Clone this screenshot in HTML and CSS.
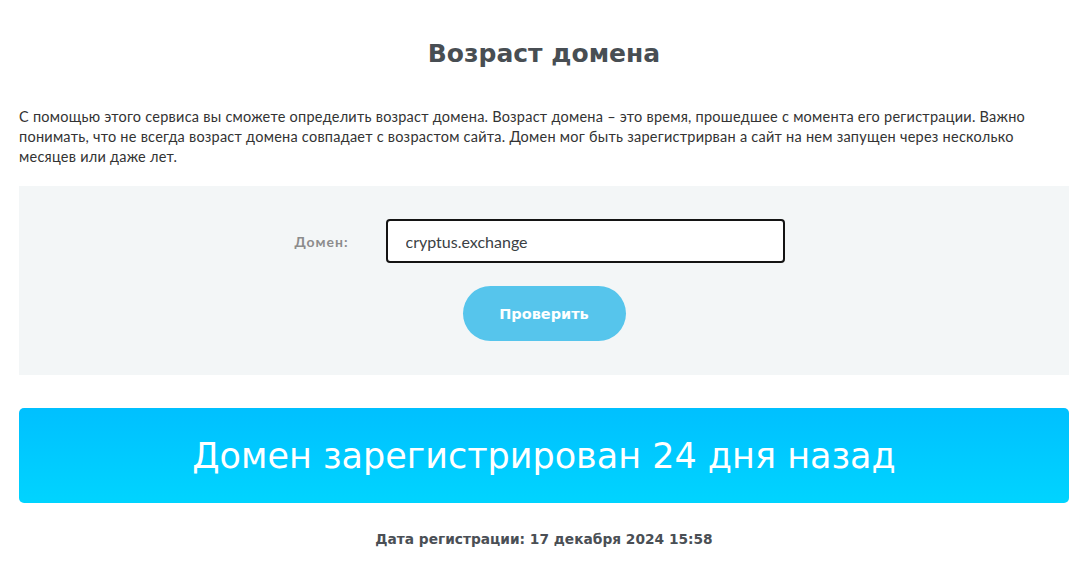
FILE: index.html
```html
<!DOCTYPE html>
<html lang="ru">
<head>
<meta charset="utf-8">
<title>Возраст домена</title>
<link rel="stylesheet" href="styles.css">
</head>
<body>
<main class="page">
  <h1 class="title">Возраст домена</h1>
  <p class="intro">С помощью этого сервиса вы сможете определить возраст домена. Возраст домена – это время, прошедшее с момента его регистрации. Важно понимать, что не всегда возраст домена совпадает с возрастом сайта. Домен мог быть зарегистрирван а сайт на нем запущен через несколько месяцев или даже лет.</p>
  <form class="check-box">
    <div class="field-row">
      <label class="field-label" for="domain">Домен:</label>
      <input class="field-input" id="domain" type="text" value="cryptus.exchange">
    </div>
    <button class="check-btn" type="button">Проверить</button>
  </form>
  <div class="result-banner">Домен зарегистрирован 24 дня назад</div>
  <p class="reg-date">Дата регистрации: 17 декабря 2024 15:58</p>
</main>
</body>
</html>
```
FILE: styles.css
```css
html, body {
  margin: 0;
  padding: 0;
  background: #ffffff;
}
.page {
  box-sizing: border-box;
  width: 1089px;
  padding: 0 20px 0 19px;
  display: flex;
  flex-direction: column;
}
.title {
  margin: 38px 0 0;
  font-family: "DejaVu Sans", sans-serif;
  font-weight: 700;
  font-size: 25px;
  line-height: 32px;
  text-align: center;
  color: #484e53;
}
.intro {
  margin: 37px 0 0;
  font-family: "Lato", sans-serif;
  font-size: 14.5px;
  line-height: 20px;
  letter-spacing: 0.25px;
  color: #333333;
}
.check-box {
  margin: 19px 0 0;
  background: #f3f6f7;
  padding: 33px 0 34px;
  display: flex;
  flex-direction: column;
  align-items: center;
  gap: 23px;
}
.field-row {
  display: flex;
  align-items: center;
  gap: 37px;
  padding-right: 9px;
}
.field-label {
  font-family: "Lato", sans-serif;
  font-weight: 700;
  font-size: 14px;
  color: #8c8c8c;
  letter-spacing: 1px;
}
.field-input {
  box-sizing: border-box;
  width: 399px;
  height: 44px;
  border: 2px solid #141414;
  border-radius: 4px;
  padding: 0 18px;
  background: #ffffff;
  font-family: "Lato", sans-serif;
  font-size: 16px;
  color: #3a3f44;
  outline: none;
}
.check-btn {
  width: 163px;
  height: 55px;
  border: none;
  border-radius: 28px;
  background: #56c5ec;
  color: #ffffff;
  font-family: "DejaVu Sans", sans-serif;
  font-weight: 700;
  font-size: 14.5px;
  cursor: pointer;
}
.result-banner {
  margin-top: 33px;
  height: 95px;
  border-radius: 5px;
  background: linear-gradient(180deg, #00c0ff 0%, #00d4ff 100%);
  display: flex;
  align-items: center;
  justify-content: center;
  font-family: "DejaVu Sans", sans-serif;
  font-weight: 400;
  font-size: 35px;
  color: #ffffff;
}
.reg-date {
  margin: 26px 0 0;
  text-align: center;
  font-family: "DejaVu Sans", sans-serif;
  font-weight: 700;
  font-size: 13.75px;
  line-height: 20px;
  color: #4a4f55;
}
```
